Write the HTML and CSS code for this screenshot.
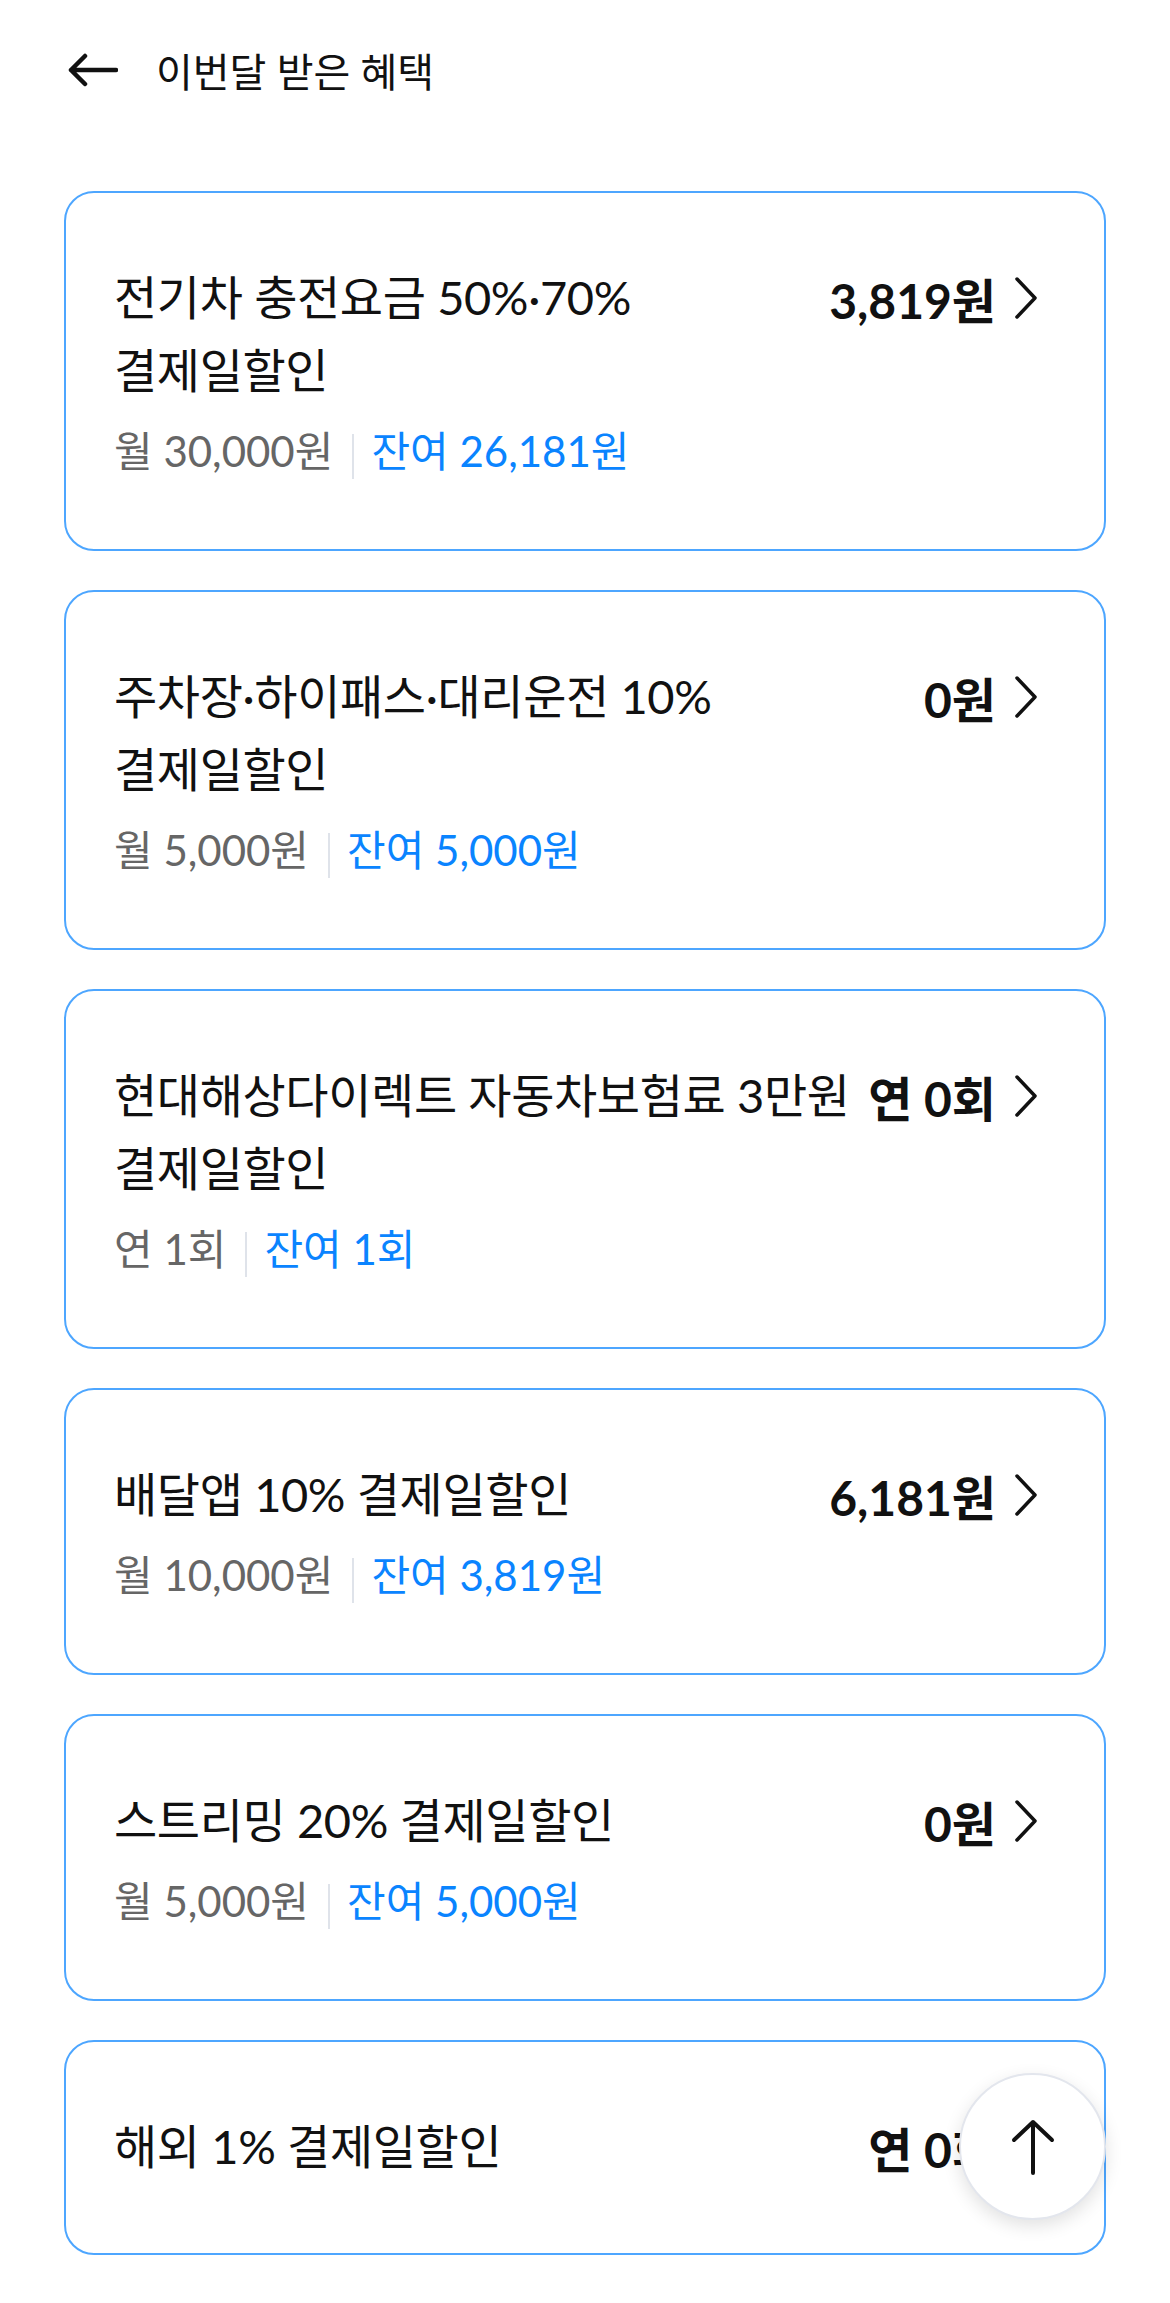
FILE: index.html
```html
<!DOCTYPE html>
<html lang="ko">
<head>
  <meta charset="UTF-8">
  <meta name="viewport" content="width=device-width, initial-scale=1.0">
  <title>이번달 받은 혜택</title>
  <link rel="stylesheet" href="styles.css">
</head>
<body>

  <!-- Header -->
  <header class="top-bar">
    <button class="back-button" aria-label="뒤로">
      <svg width="50" height="34" viewBox="0 0 50 34" fill="none" stroke="#111" stroke-width="4.5" stroke-linecap="round" stroke-linejoin="round">
        <path d="M48 17H3M17 3L3 17L17 31"/>
      </svg>
    </button>
    <h1 class="page-title">이번달 받은 혜택</h1>
  </header>

  <!-- Benefit list -->
  <main class="benefit-list">

    <a class="benefit-card" href="#">
      <div class="benefit-info">
        <p class="benefit-name">전기차 충전요금 50%·70% 결제일할인</p>
        <p class="benefit-limit">
          <span class="limit-total">월 30,000원</span>
          <span class="limit-left">잔여 26,181원</span>
        </p>
      </div>
      <div class="benefit-amount">
        <span>3,819원</span>
        <svg class="chevron" width="26" height="42" viewBox="0 0 26 42" fill="none" stroke="#111" stroke-width="3.5" stroke-linecap="round" stroke-linejoin="round"><path d="M4 2L22 21L4 40"/></svg>
      </div>
    </a>

    <a class="benefit-card" href="#">
      <div class="benefit-info">
        <p class="benefit-name">주차장·하이패스·대리운전 10% 결제일할인</p>
        <p class="benefit-limit">
          <span class="limit-total">월 5,000원</span>
          <span class="limit-left">잔여 5,000원</span>
        </p>
      </div>
      <div class="benefit-amount">
        <span>0원</span>
        <svg class="chevron" width="26" height="42" viewBox="0 0 26 42" fill="none" stroke="#111" stroke-width="3.5" stroke-linecap="round" stroke-linejoin="round"><path d="M4 2L22 21L4 40"/></svg>
      </div>
    </a>

    <a class="benefit-card" href="#">
      <div class="benefit-info">
        <p class="benefit-name">현대해상다이렉트 자동차보험료 3만원 결제일할인</p>
        <p class="benefit-limit">
          <span class="limit-total">연 1회</span>
          <span class="limit-left">잔여 1회</span>
        </p>
      </div>
      <div class="benefit-amount">
        <span>연 0회</span>
        <svg class="chevron" width="26" height="42" viewBox="0 0 26 42" fill="none" stroke="#111" stroke-width="3.5" stroke-linecap="round" stroke-linejoin="round"><path d="M4 2L22 21L4 40"/></svg>
      </div>
    </a>

    <a class="benefit-card" href="#">
      <div class="benefit-info">
        <p class="benefit-name">배달앱 10% 결제일할인</p>
        <p class="benefit-limit">
          <span class="limit-total">월 10,000원</span>
          <span class="limit-left">잔여 3,819원</span>
        </p>
      </div>
      <div class="benefit-amount">
        <span>6,181원</span>
        <svg class="chevron" width="26" height="42" viewBox="0 0 26 42" fill="none" stroke="#111" stroke-width="3.5" stroke-linecap="round" stroke-linejoin="round"><path d="M4 2L22 21L4 40"/></svg>
      </div>
    </a>

    <a class="benefit-card" href="#">
      <div class="benefit-info">
        <p class="benefit-name">스트리밍 20% 결제일할인</p>
        <p class="benefit-limit">
          <span class="limit-total">월 5,000원</span>
          <span class="limit-left">잔여 5,000원</span>
        </p>
      </div>
      <div class="benefit-amount">
        <span>0원</span>
        <svg class="chevron" width="26" height="42" viewBox="0 0 26 42" fill="none" stroke="#111" stroke-width="3.5" stroke-linecap="round" stroke-linejoin="round"><path d="M4 2L22 21L4 40"/></svg>
      </div>
    </a>

    <a class="benefit-card" href="#">
      <div class="benefit-info">
        <p class="benefit-name">해외 1% 결제일할인</p>
      </div>
      <div class="benefit-amount">
        <span>연 0회</span>
        <svg class="chevron" width="26" height="42" viewBox="0 0 26 42" fill="none" stroke="#111" stroke-width="3.5" stroke-linecap="round" stroke-linejoin="round"><path d="M4 2L22 21L4 40"/></svg>
      </div>
    </a>

  </main>

  <!-- Scroll to top -->
  <button class="top-button" aria-label="맨 위로">
    <svg width="44" height="56" viewBox="0 0 44 56" fill="none" stroke="#111" stroke-width="4" stroke-linecap="round" stroke-linejoin="round">
      <path d="M22 54V3M3 21L22 3L41 21"/>
    </svg>
  </button>

</body>
</html>
```

FILE: styles.css
```css
/* General Styles */
* {
  padding: 0;
  margin: 0;
  box-sizing: border-box;
}

body {
  font-family: 'Lato', 'Noto Sans CJK KR', sans-serif;
  background: #fff;
  color: #111;
  word-break: keep-all;
}

/* Header */
.top-bar {
  display: flex;
  align-items: center;
  height: 140px;
  padding: 0 68px;
  gap: 38px;
}

.back-button {
  display: flex;
  background: none;
  border: none;
  cursor: pointer;
}

.page-title {
  font-size: 40px;
  font-weight: 400;
  color: #111;
}

/* Benefit list */
.benefit-list {
  display: flex;
  flex-direction: column;
  gap: 39px;
  padding: 51px 64px 40px;
}

.benefit-card {
  display: flex;
  align-items: flex-start;
  gap: 4px;
  padding: 68px 65px 70px 48px;
  border: 2px solid #4da6ff;
  border-radius: 30px;
  color: inherit;
  text-decoration: none;
}

.benefit-info {
  flex: 1;
}

.benefit-name {
  font-size: 47px;
  line-height: 73px;
  letter-spacing: -0.4px;
  color: #111;
}

.benefit-limit {
  display: flex;
  align-items: center;
  margin-top: 16px;
  font-size: 42px;
  line-height: 56px;
}

.limit-total {
  color: #666;
}

.limit-total::after {
  content: '';
  display: inline-block;
  width: 2px;
  height: 45px;
  margin: 0 17px 0 19px;
  background: #dfe3ea;
  vertical-align: middle;
}

.limit-left {
  color: #0a84ff;
}

.benefit-amount {
  display: flex;
  align-items: center;
  gap: 17px;
  height: 73px;
  font-size: 48px;
  font-weight: 700;
  white-space: nowrap;
}

/* Scroll to top */
.top-button {
  position: fixed;
  right: 64px;
  bottom: 83px;
  width: 147px;
  height: 147px;
  display: flex;
  align-items: center;
  justify-content: center;
  background: #fff;
  border: 2px solid #e3e6ed;
  border-radius: 50%;
  box-shadow: 0 6px 18px rgba(0, 0, 0, 0.12);
  cursor: pointer;
}
```
